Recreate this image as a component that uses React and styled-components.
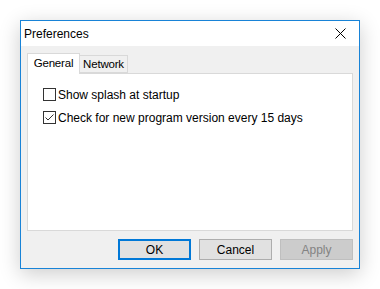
import React from 'react'
import styled, { createGlobalStyle } from 'styled-components'

const Global = createGlobalStyle`
	html, body {
		margin: 0;
		background: #ffffff;
	}
	body {
		font-family: "Liberation Sans", Arial, sans-serif;
		font-size: 12px;
		color: #000;
	}
`

const Page = styled.div`
	width: 380px;
	height: 289px;
	padding: 20px 0 0 20px;
	box-sizing: border-box;
`

const Window = styled.div`
	width: 340px;
	height: 249px;
	box-sizing: border-box;
	border: 1px solid #1883d7;
	background: #f0f0f0;
	display: flex;
	flex-direction: column;
	box-shadow: 0 5px 20px rgba(0, 0, 0, 0.2);
`

const TitleBar = styled.div`
	height: 25px;
	background: #ffffff;
	display: flex;
	align-items: center;
	justify-content: space-between;
	padding: 0 0 0 3px;
`

const Title = styled.span`
	font-size: 12px;
	padding-top: 1px;
`

const CloseButton = styled.div`
	width: 30px;
	height: 25px;
	margin-right: 4px;
	display: flex;
	align-items: center;
	justify-content: center;
`

const Body = styled.div`
	flex: 1;
	display: flex;
	flex-direction: column;
	padding: 7px 6px 7px 6px;
`

const TabStrip = styled.div`
	display: flex;
	align-items: flex-end;
	height: 20px;
`

const Tab = styled.div`
	box-sizing: border-box;
	width: ${props => props.width}px;
	height: ${props => (props.active ? '21px' : '18px')};
	margin-bottom: ${props => (props.active ? '-1px' : '0')};
	padding-top: ${props => (props.active ? '2px' : '1px')};
	text-align: center;
	font-size: 11.5px;
	letter-spacing: -0.2px;
	border: 1px solid #d9d9d9;
	border-bottom: ${props => (props.active ? 'none' : '1px solid #d9d9d9')};
	border-left: ${props => (props.active ? '1px solid #d9d9d9' : 'none')};
	background: ${props => (props.active ? '#ffffff' : '#f0f0f0')};
	position: relative;
	z-index: ${props => (props.active ? 1 : 0)};
	line-height: 15px;
`

const Panel = styled.div`
	height: 158px;
	box-sizing: border-box;
	border: 1px solid #d9d9d9;
	background: #ffffff;
	padding: 14px 15px;
	display: flex;
	flex-direction: column;
	gap: 10px;
`

const CheckRow = styled.label`
	display: flex;
	align-items: center;
	gap: 2px;
	height: 13px;
	white-space: nowrap;
`

const Box = styled.span`
	width: 13px;
	height: 13px;
	box-sizing: border-box;
	border: 1px solid #333333;
	background: #ffffff;
	display: flex;
	align-items: center;
	justify-content: center;
`

const Buttons = styled.div`
	display: flex;
	justify-content: flex-end;
	gap: 8px;
	margin-top: 8px;
`

const Button = styled.div`
	width: 73px;
	height: 21px;
	box-sizing: border-box;
	display: flex;
	align-items: center;
	justify-content: center;
	background: ${props => (props.disabled ? '#cccccc' : '#e1e1e1')};
	border: ${props =>
		props.primary ? '2px solid #0078d7' : props.disabled ? '1px solid #bfbfbf' : '1px solid #adadad'};
	color: ${props => (props.disabled ? '#838383' : '#000000')};
`

function Check({ checked, label }) {
	return (
		<CheckRow>
			<Box>
				{checked && (
					<svg width="11" height="11" viewBox="0 0 11 11">
						<path d="M1.5 5.5 L4 8 L9.5 2.5" fill="none" stroke="#333" strokeWidth="1" />
					</svg>
				)}
			</Box>
			<span>{label}</span>
		</CheckRow>
	)
}

export default function App() {
	return (
		<Page>
			<Global />
			<Window>
				<TitleBar>
					<Title>Preferences</Title>
					<CloseButton>
						<svg width="11" height="11" viewBox="0 0 11 11">
							<path d="M0.5 0.5 L10.5 10.5 M10.5 0.5 L0.5 10.5" stroke="#000" strokeWidth="1" />
						</svg>
					</CloseButton>
				</TitleBar>
				<Body>
					<TabStrip>
						<Tab active width={53}>General</Tab>
						<Tab width={48}>Network</Tab>
					</TabStrip>
					<Panel>
						<Check label="Show splash at startup" />
						<Check checked label="Check for new program version every 15 days" />
					</Panel>
					<Buttons>
						<Button primary>OK</Button>
						<Button>Cancel</Button>
						<Button disabled>Apply</Button>
					</Buttons>
				</Body>
			</Window>
		</Page>
	)
}
